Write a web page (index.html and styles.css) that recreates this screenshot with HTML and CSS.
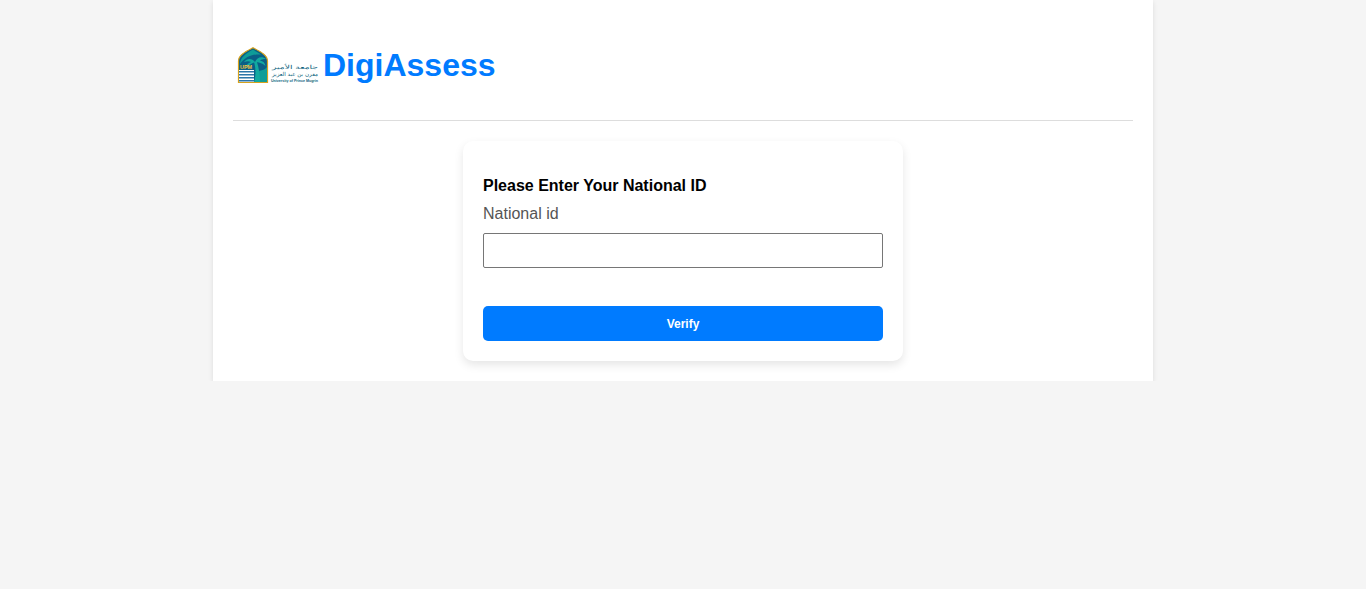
FILE: index.html
```html
<!DOCTYPE html>
<html lang="en">
  <head>
    <meta charset="UTF-8" />
    <meta name="viewport" content="width=device-width, initial-scale=1.0" />
    <title>DigiAssess</title>
    <link rel="stylesheet" href="styles.css">
  </head>
  <body>
    <div class="container">
      <header class="site-header">
        <svg class="logo" width="82" height="37" viewBox="0 0 82 37">
          <!-- crest -->
          <path d="M1.500 35.500V14C1.500 8 9 4.500 16 0.800C23 4.500 30.500 8 30.500 14V35.500Z" fill="#0a5f86" stroke="#d6a21e" stroke-width="1.200"/>
          <path d="M3 17C3 10 10 6 16 2.500C19 4.500 22 6 24 7.500C15 7 8 10 3 17Z" fill="#0f9c98"/>
          <!-- palm -->
          <path d="M22 35V24C26 23 29 22 30 20V35Z" fill="#0f9c98"/>
          <path d="M17 35C19 28 19 22 17 15L20 15C22 22 23 28 23 35Z" fill="#12aaa0"/>
          <path d="M18 15C15 11 10 11 7 15C10 14 12 14 14 15C11 16 9 18 9 21C12 18 15 16 18 15Z" fill="#12aaa0"/>
          <path d="M18 15C20 10 25 9 29 12C26 12 24 12.500 23 13.500C26 14 28 16 28.500 19C25 16 22 15 18 15Z" fill="#12aaa0"/>
          <!-- stripes -->
          <rect x="2" y="23" width="15" height="12" fill="#fff"/>
          <rect x="2" y="24" width="15" height="1.500" fill="#2b75a8"/>
          <rect x="2" y="27" width="15" height="1.500" fill="#2b75a8"/>
          <rect x="2" y="30" width="15" height="1.500" fill="#2b75a8"/>
          <rect x="2" y="33" width="15" height="1.500" fill="#2b75a8"/>
          <text class="crest-text" x="3" y="21.500" textLength="12" lengthAdjust="spacingAndGlyphs">UPM</text>
          <!-- university name -->
          <text class="logo-ar" x="81" y="22" textLength="46" lengthAdjust="spacingAndGlyphs" direction="rtl">جامعة الأمير</text>
          <text class="logo-ar" x="81" y="29" textLength="46" lengthAdjust="spacingAndGlyphs" direction="rtl">مقرن بن عبد العزيز</text>
          <text class="logo-en" x="34" y="35" textLength="47" lengthAdjust="spacingAndGlyphs">University of Prince Mugrin</text>
        </svg>
        <h1 class="site-title">DigiAssess</h1>
      </header>

      <main class="card">
        <h2 class="card-title">Please Enter Your National ID</h2>
        <form>
          <label class="field-label" for="national-id">National id</label>
          <input class="field-input" type="text" id="national-id" name="national_id" />
          <button class="verify-btn" type="button">Verify</button>
        </form>
      </main>
    </div>
  </body>
</html>
```

FILE: styles.css
```css
body {
  font-family: "Liberation Sans", Arial, sans-serif;
  background-color: #f5f5f5;
  margin: 0;
  padding: 0;
  color: #000;
}

.container {
  width: 900px;
  margin: 0 auto;
  padding: 0 20px 20px;
  background-color: #fff;
  box-shadow: 0 2px 5px rgba(0, 0, 0, 0.1);
}

.site-header {
  display: flex;
  align-items: center;
  gap: 4px;
  height: 120px;
  padding-left: 4px;
  border-bottom: 1px solid #ddd;
  margin-bottom: 20px;
}

.logo {
  flex: none;
  margin-top: 11px;
}

.crest-text {
  font-size: 5px;
  font-weight: bold;
  fill: #f0c040;
}

.logo-ar {
  font-family: "DejaVu Sans", sans-serif;
  font-size: 5.500px;
  fill: #0b5f7c;
}

.logo-en {
  font-size: 3.500px;
  font-weight: bold;
  fill: #0b5f7c;
}

.site-title {
  margin: 10px 0 0;
  font-size: 32px;
  font-weight: bold;
  color: #007bff;
}

.card {
  width: 400px;
  margin: 0 auto;
  padding: 35px 20px 20px;
  background-color: #fff;
  border-radius: 10px;
  box-shadow: 0 4px 10px rgba(0, 0, 0, 0.1);
}

.card-title {
  margin: 0 0 9px;
  font-size: 16px;
  line-height: 19px;
  font-weight: bold;
}

.field-label {
  display: block;
  font-size: 16px;
  line-height: 19px;
  color: #555;
  margin-bottom: 10px;
}

.field-input {
  display: block;
  width: 100%;
  height: 35px;
  box-sizing: border-box;
  border: 1px solid #767676;
  border-radius: 2px;
  margin-bottom: 38px;
}

.verify-btn {
  display: block;
  width: 100%;
  height: 35px;
  font-family: inherit;
  font-size: 12px;
  font-weight: bold;
  color: #fff;
  background-color: #007bff;
  border: none;
  border-radius: 5px;
  cursor: pointer;
}
```
